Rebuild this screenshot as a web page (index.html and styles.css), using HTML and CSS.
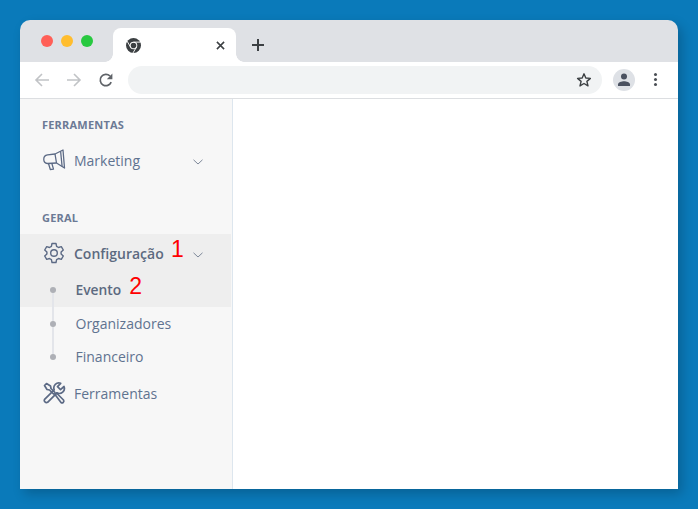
FILE: index.html
```html
<!DOCTYPE html>
<html lang="pt">
<head>
<meta charset="utf-8">
<title>Configuração</title>
<link rel="stylesheet" href="styles.css">
</head>
<body>
<div class="window">
  <header class="tabstrip">
    <div class="lights"><i class="light red"></i><i class="light yellow"></i><i class="light green"></i></div>
    <div class="tab">
      <svg class="chrome-logo" width="15" height="15" viewBox="0 0 16 16"><circle cx="8" cy="8" r="8" fill="#3c4043"/><circle cx="8" cy="8" r="4" fill="#fff"/><circle cx="8" cy="8" r="3" fill="#3c4043"/><path d="M8 4.400h7.500M4.900 9.800 1.200 3.400M11.100 9.800 7.400 16" stroke="#fff" stroke-width="1" fill="none"/></svg>
      <svg class="tab-close" width="9" height="9" viewBox="0 0 10 10"><path d="M1 1l8 8M9 1l-8 8" stroke="#3c4043" stroke-width="1.700" fill="none"/></svg>
    </div>
    <svg class="new-tab" width="12" height="12" viewBox="0 0 12 12"><path d="M6 0v12M0 6h12" stroke="#3c4043" stroke-width="2" fill="none"/></svg>
  </header>
  <div class="toolbar">
    <svg class="nav-icon" width="16" height="16" viewBox="0 0 16 16"><path d="M15 8H2M8 2 2 8l6 6" stroke="#c1c3c6" stroke-width="1.600" fill="none"/></svg>
    <svg class="nav-icon" width="16" height="16" viewBox="0 0 16 16"><path d="M1 8h13M8 2l6 6-6 6" stroke="#c1c3c6" stroke-width="1.600" fill="none"/></svg>
    <svg class="nav-icon" width="16" height="16" viewBox="0 0 16 16"><path d="M13.200 10.200A5.700 5.700 0 1 1 12 4" stroke="#5f6368" stroke-width="1.700" fill="none"/><path d="M14.400 1.600v5.600H8.800z" fill="#5f6368"/></svg>
    <div class="omnibox">
      <svg width="16" height="16" viewBox="0 0 16 16"><path d="M8 1.800l1.800 4.200 4.600.4-3.500 3 1.100 4.500L8 11.500l-4 2.400 1.100-4.500-3.500-3 4.600-.4z" stroke="#3c4043" stroke-width="1.400" stroke-linejoin="round" fill="none"/></svg>
    </div>
    <div class="avatar">
      <svg width="14" height="14" viewBox="0 0 14 14"><circle cx="7" cy="3.600" r="3" fill="#4a5160"/><path d="M1 13v-1.600C1 9.400 4.600 8.200 7 8.200s6 1.200 6 3.200V13z" fill="#4a5160"/></svg>
    </div>
    <div class="kebab"><i></i><i></i><i></i></div>
  </div>
  <div class="page">
    <aside class="sidebar">
      <h2 class="section-title">FERRAMENTAS</h2>
      <a class="menu-item first">
        <svg class="menu-icon" width="24" height="24" viewBox="0 0 24 24" fill="none" stroke="#5c6a85" stroke-width="1.300" stroke-linejoin="round"><path d="M5.500 6.800 13 6 21 2l1.500 18-8-5-9 .5a4.400 4.400 0 0 1 0-8.700z"/><path d="M13 6l1.500 9M18.600 3.200l1.500 15.300"/><path d="M6.500 15.500l1.800 6 3.200-.4-1.700-5.900"/></svg>
        <span class="menu-label">Marketing</span>
        <svg class="chevron" width="10" height="6" viewBox="0 0 10 6"><path d="M.5.800 5 5 9.500.800" stroke="#7d8899" stroke-width="1" fill="none"/></svg>
      </a>
      <h2 class="section-title geral">GERAL</h2>
      <div class="active-group">
        <a class="menu-item">
          <svg class="menu-icon" width="24" height="24" viewBox="0 0 24 24" fill="none" stroke="#5c6a85" stroke-width="1.400" stroke-linejoin="round"><circle cx="12" cy="12" r="3.300"/><path d="M10 2.500h4l.6 2.900 1.900 1.100 2.800-.9 2 3.400-2.200 2v2l2.200 2-2 3.400-2.800-.9-1.900 1.100-.6 2.900h-4l-.6-2.900-1.900-1.100-2.800.9-2-3.400 2.200-2v-2l-2.200-2 2-3.400 2.800.9 1.900-1.100z"/></svg>
          <span class="menu-label strong">Configuração</span>
          <span class="marker marker-one">1</span>
          <svg class="chevron" width="10" height="6" viewBox="0 0 10 6"><path d="M.5.800 5 5 9.500.800" stroke="#7d8899" stroke-width="1" fill="none"/></svg>
        </a>
        <a class="sub-item current"><i class="dot"></i><span class="sub-label strong">Evento</span><span class="marker marker-two">2</span></a>
      </div>
      <a class="sub-item"><i class="dot"></i><span class="sub-label">Organizadores</span></a>
      <a class="sub-item last"><i class="dot"></i><span class="sub-label">Financeiro</span></a>
      <a class="menu-item tools">
        <svg class="menu-icon" width="24" height="24" viewBox="0 0 24 24" fill="none" stroke="#5c6a85" stroke-width="1.700" stroke-linejoin="round"><path d="M2.500 4.500 4.500 2.500l4 2.500.5 2.500 4 4-1.500 1.500-4-4L5 8.500z"/><path d="M13 13.500l1.500-1.500 7 7a1.800 1.800 0 0 1-2.500 2.500z"/><path d="M22 5.500l-3.500 3.200-3-3L18.700 2.300a5 5 0 0 0-6.500 6.500L2.600 18.300a2.200 2.200 0 0 0 3 3l9.400-9.500A5 5 0 0 0 22 5.500z"/></svg>
        <span class="menu-label">Ferramentas</span>
      </a>
    </aside>
    <main class="content"></main>
  </div>
</div>
</body>
</html>
```
FILE: styles.css
```css
* { box-sizing: border-box; }
html, body { margin: 0; height: 100%; }
body {
  background: #0a7aba;
  padding: 20px;
  font-family: "Open Sans", sans-serif;
  overflow: hidden;
}
.window {
  width: 658px;
  height: 469px;
  border-radius: 10px 10px 0 0;
  overflow: hidden;
  display: flex;
  flex-direction: column;
  box-shadow: 4px 5px 12px rgba(0, 0, 0, .2);
}
.tabstrip {
  height: 42px;
  flex: none;
  background: #dfe1e5;
  display: flex;
  align-items: flex-end;
  padding-left: 21px;
}
.lights { display: flex; gap: 8px; align-self: flex-start; padding-top: 15px; }
.light { width: 12px; height: 12px; border-radius: 50%; display: block; }
.red { background: #ff5f57; }
.yellow { background: #ffbd2e; }
.green { background: #28c940; }
.tab {
  width: 123px;
  height: 34px;
  margin-left: 20px;
  background: #fff;
  border-radius: 8px 8px 0 0;
  display: flex;
  align-items: center;
  justify-content: space-between;
  padding: 0 11px 0 13px;
  position: relative;
}
.tab::before,
.tab::after {
  content: "";
  position: absolute;
  bottom: 0;
  width: 8px;
  height: 8px;
}
.tab::before {
  left: -8px;
  background: radial-gradient(circle at 0 0, transparent 7.500px, #fff 8px);
}
.tab::after {
  right: -8px;
  background: radial-gradient(circle at 100% 0, transparent 7.500px, #fff 8px);
}
.new-tab { margin: 0 0 11px 16px; }
.toolbar {
  height: 37px;
  flex: none;
  background: #fff;
  border-bottom: 1px solid #dcdee1;
  display: flex;
  align-items: center;
  padding: 0 15px 1px 14px;
}
.nav-icon { margin-right: 16px; }
.omnibox {
  width: 474px;
  height: 28px;
  margin-left: -2px;
  background: #f1f3f4;
  border-radius: 14px;
  display: flex;
  align-items: center;
  justify-content: flex-end;
  padding-right: 10px;
}
.avatar {
  width: 22px;
  height: 22px;
  margin-left: 11px;
  border-radius: 50%;
  background: #dee1e6;
  display: flex;
  align-items: center;
  justify-content: center;
}
.kebab {
  margin-left: 19px;
  display: flex;
  flex-direction: column;
  gap: 2px;
}
.kebab i { width: 3px; height: 3px; border-radius: 50%; background: #4a4e54; display: block; }
.page { flex: 1; display: flex; min-height: 0; }
.sidebar {
  width: 213px;
  flex: none;
  background: #f7f7f7;
  border-right: 1px solid #dde6ee;
  padding-top: 19px;
}
.content { flex: 1; background: #fff; }
.section-title {
  margin: 0;
  padding-left: 22px;
  font-size: 11px;
  line-height: 14px;
  font-weight: 700;
  letter-spacing: .2px;
  color: #6c7a95;
}
.geral { margin-top: 33px; margin-bottom: 9px; }
.menu-item {
  height: 36px;
  display: flex;
  align-items: center;
  padding-left: 22px;
  position: relative;
}
.first { margin-top: 10px; }
.menu-icon { flex: none; }
.menu-label { margin-left: 8px; font-size: 14px; color: #5f7390; }
.strong { font-weight: 600; color: #5c6a80; }
.chevron { position: absolute; left: 173px; top: 17px; }
.active-group { background: #eeeeee; width: 211px; padding-top: 1px; }
.marker { color: #f00; font-size: 23px; line-height: 1; font-family: "Liberation Sans", sans-serif; }
.marker-one { position: absolute; left: 151px; top: 3px; }
.marker-two { margin-left: 8px; position: relative; top: -3px; }
.sub-item {
  height: 33px;
  display: flex;
  align-items: center;
  padding-left: 30px;
  position: relative;
}
.current { height: 36px; padding-top: 1px; }
.sub-item::before {
  content: "";
  position: absolute;
  left: 32px;
  top: 0;
  bottom: 0;
  width: 2px;
  background: #e3e5ea;
}
.current::before { top: 50%; }
.last::before { bottom: 50%; }
.dot {
  width: 6px;
  height: 6px;
  border-radius: 50%;
  background: #aeb0b6;
  position: relative;
  z-index: 1;
}
.sub-label { margin-left: 19.500px; font-size: 14px; color: #5f7390; }
.sub-label.strong { color: #5c6a80; font-size: 13.800px; }
.tools { margin-top: 2px; }
```
